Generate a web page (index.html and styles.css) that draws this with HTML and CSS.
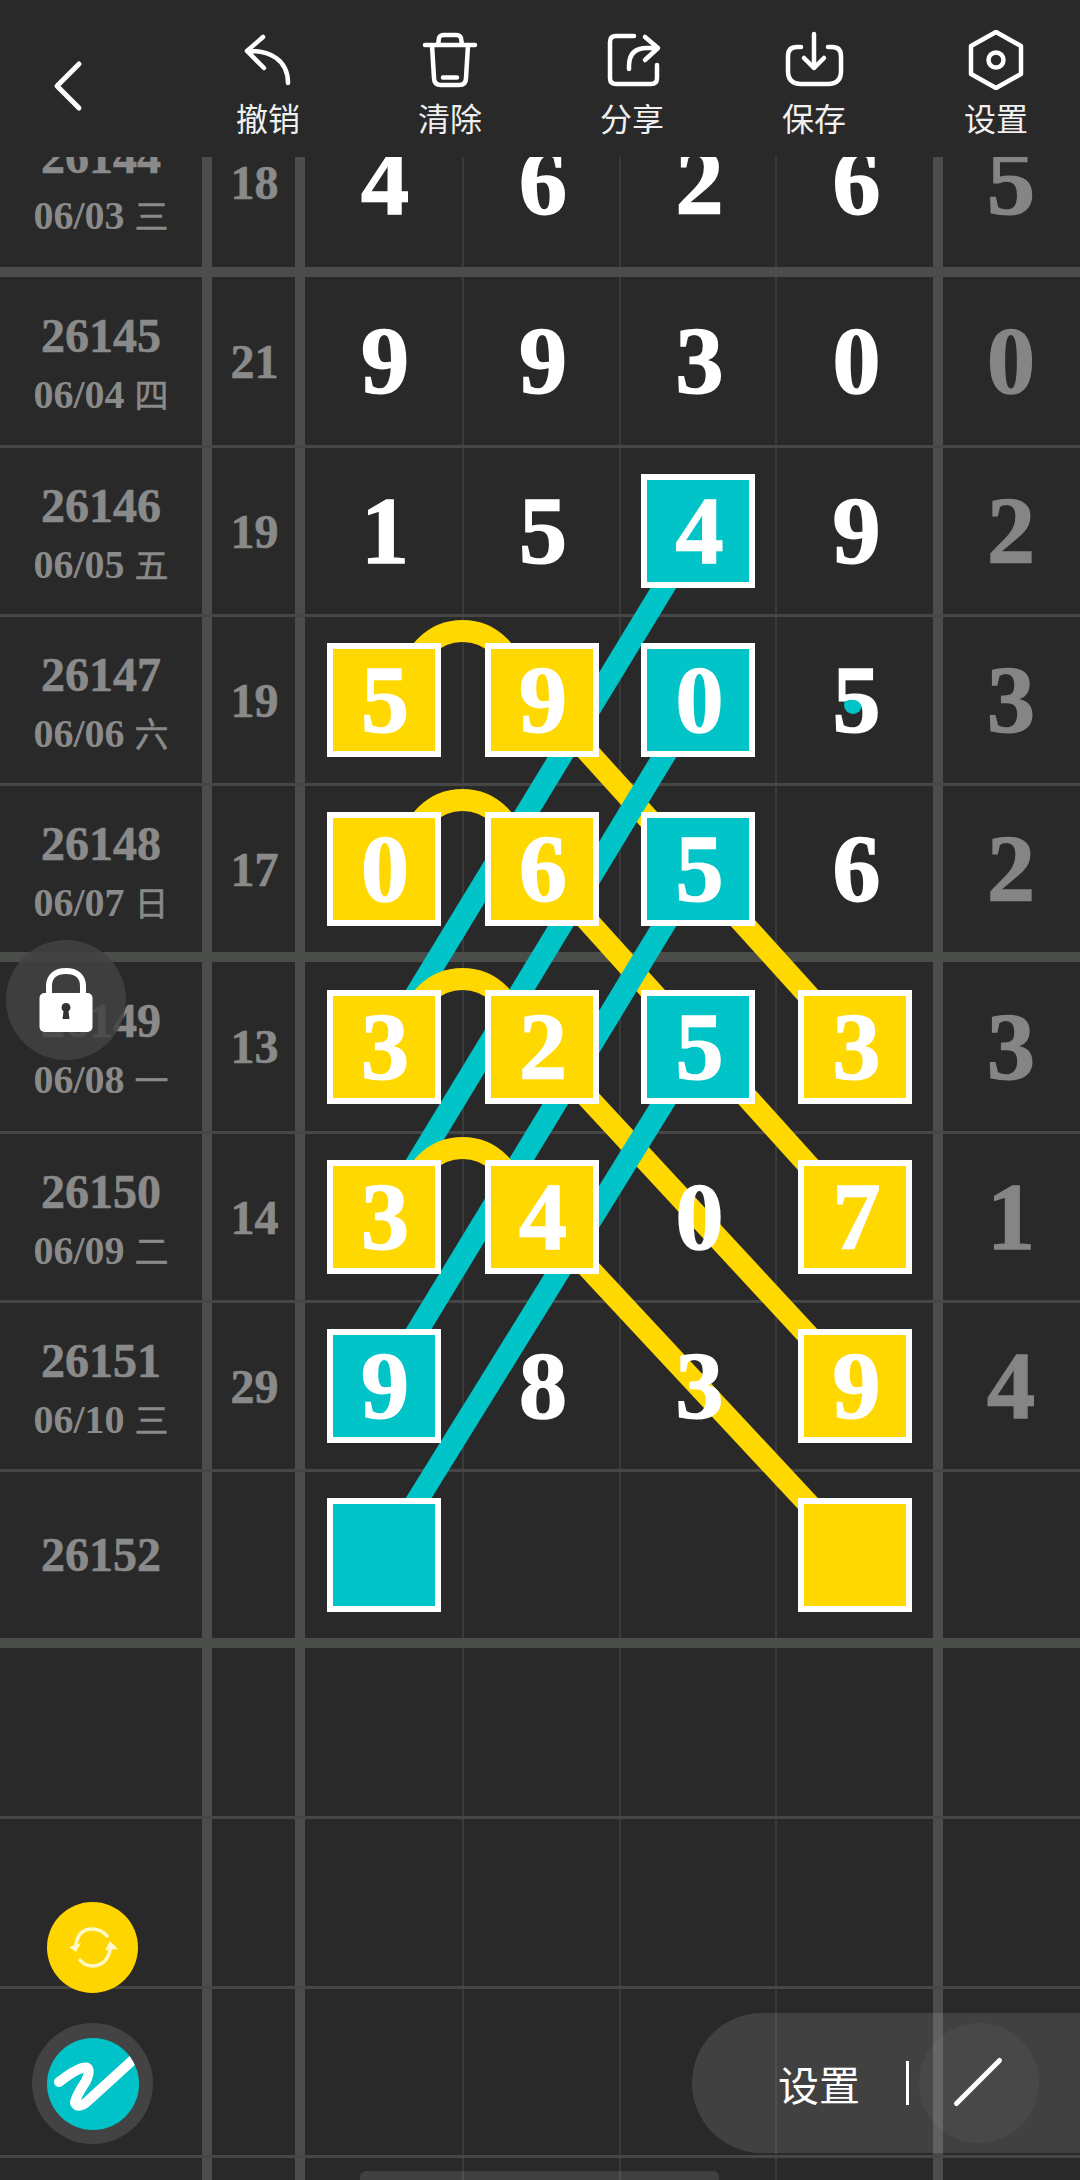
FILE: index.html
```html
<!DOCTYPE html>
<html lang="zh">
<head>
<meta charset="utf-8">
<title>走势图</title>
<link rel="stylesheet" href="styles.css">
</head>
<body>
<div class="page">
  <header class="toolbar">
    <div class="back">
      <svg class="back-icon" viewBox="0 0 36 56" width="36" height="56"><polyline points="29,6 7,28 29,50"/></svg>
    </div>
    <div class="tool">
      <svg class="icon" viewBox="0 0 60 60" width="60" height="60"><path d="M25 7 9 21 26 38M9 21C32 20 50 30 50 53"/></svg>
      <span class="tool-label">撤销</span>
    </div>
    <div class="tool">
      <svg class="icon" viewBox="0 0 60 60" width="60" height="60"><path d="M5 15H55M18 15 19 8Q20 5 24 5H36Q40 5 41 8L42 15M12 15 14 48Q14 55 21 55H39Q46 55 46 48L48 15M23 47.500H37"/></svg>
      <span class="tool-label">清除</span>
    </div>
    <div class="tool">
      <svg class="icon" viewBox="0 0 60 60" width="60" height="60"><path d="M32 6H14Q8 6 8 12V48Q8 54 14 54H49Q55 54 55 48V35M43 7 56 18 43 30M27 39V36Q27 18 45 18H55"/></svg>
      <span class="tool-label">分享</span>
    </div>
    <div class="tool">
      <svg class="icon" viewBox="0 0 60 60" width="60" height="60"><path d="M17 17H13Q4 17 4 26V41Q4 54 17 54H44Q57 54 57 41V26Q57 17 48 17H44M30 4V38M20 28 30 38 40 28"/></svg>
      <span class="tool-label">保存</span>
    </div>
    <div class="tool">
      <svg class="icon" viewBox="0 0 60 60" width="60" height="60"><path d="M30 2 55 16V44L30 58 5 44V16Z"/><circle cx="30" cy="30" r="7.500"/></svg>
      <span class="tool-label">设置</span>
    </div>
  </header>

  <main class="board">
    <svg class="links" viewBox="0 97 1080 2083">
      <g class="link-yellow">
        <line x1="541" y1="700" x2="855" y2="1047"/>
        <line x1="541" y1="869" x2="855" y2="1217"/>
        <line x1="541" y1="1047" x2="855" y2="1386"/>
        <line x1="541" y1="1217" x2="855" y2="1554"/>
      </g>
      <g class="link-cyan">
        <line x1="698" y1="531" x2="384" y2="1047"/>
        <line x1="698" y1="700" x2="384" y2="1217"/>
        <line x1="698" y1="869" x2="384" y2="1386"/>
        <line x1="698" y1="1047" x2="384" y2="1554"/>
      </g>
      <circle class="link-dot" cx="853" cy="705" r="9"/>
      <g class="link-arc">
        <path d="M410.500 683A52 52 0 0 1 514.500 683"/>
        <path d="M410.500 852A52 52 0 0 1 514.500 852"/>
        <path d="M410.500 1031A52 52 0 0 1 514.500 1031"/>
        <path d="M410.500 1200A52 52 0 0 1 514.500 1200"/>
      </g>
    </svg>

    <div class="row">
      <div class="cell issue"><b class="no">26144</b><span class="date">06/03 <i>三</i></span></div>
      <div class="cell sum">18</div>
      <div class="cell num"><span class="d">4</span></div>
      <div class="cell num"><span class="d">6</span></div>
      <div class="cell num"><span class="d">2</span></div>
      <div class="cell num"><span class="d">6</span></div>
      <div class="cell span"><span class="d">5</span></div>
    </div>
    <div class="row">
      <div class="cell issue"><b class="no">26145</b><span class="date">06/04 <i>四</i></span></div>
      <div class="cell sum">21</div>
      <div class="cell num"><span class="d">9</span></div>
      <div class="cell num"><span class="d">9</span></div>
      <div class="cell num"><span class="d">3</span></div>
      <div class="cell num"><span class="d">0</span></div>
      <div class="cell span"><span class="d">0</span></div>
    </div>
    <div class="row">
      <div class="cell issue"><b class="no">26146</b><span class="date">06/05 <i>五</i></span></div>
      <div class="cell sum">19</div>
      <div class="cell num"><span class="d">1</span></div>
      <div class="cell num"><span class="d">5</span></div>
      <div class="cell num"><span class="d sq teal">4</span></div>
      <div class="cell num"><span class="d">9</span></div>
      <div class="cell span"><span class="d">2</span></div>
    </div>
    <div class="row">
      <div class="cell issue"><b class="no">26147</b><span class="date">06/06 <i>六</i></span></div>
      <div class="cell sum">19</div>
      <div class="cell num"><span class="d sq gold">5</span></div>
      <div class="cell num"><span class="d sq gold">9</span></div>
      <div class="cell num"><span class="d sq teal">0</span></div>
      <div class="cell num"><span class="d">5</span></div>
      <div class="cell span"><span class="d">3</span></div>
    </div>
    <div class="row">
      <div class="cell issue"><b class="no">26148</b><span class="date">06/07 <i>日</i></span></div>
      <div class="cell sum">17</div>
      <div class="cell num"><span class="d sq gold">0</span></div>
      <div class="cell num"><span class="d sq gold">6</span></div>
      <div class="cell num"><span class="d sq teal">5</span></div>
      <div class="cell num"><span class="d">6</span></div>
      <div class="cell span"><span class="d">2</span></div>
    </div>
    <div class="row">
      <div class="cell issue"><b class="no">26149</b><span class="date">06/08 <i>一</i></span></div>
      <div class="cell sum">13</div>
      <div class="cell num"><span class="d sq gold">3</span></div>
      <div class="cell num"><span class="d sq gold">2</span></div>
      <div class="cell num"><span class="d sq teal">5</span></div>
      <div class="cell num"><span class="d sq gold">3</span></div>
      <div class="cell span"><span class="d">3</span></div>
    </div>
    <div class="row">
      <div class="cell issue"><b class="no">26150</b><span class="date">06/09 <i>二</i></span></div>
      <div class="cell sum">14</div>
      <div class="cell num"><span class="d sq gold">3</span></div>
      <div class="cell num"><span class="d sq gold">4</span></div>
      <div class="cell num"><span class="d">0</span></div>
      <div class="cell num"><span class="d sq gold">7</span></div>
      <div class="cell span"><span class="d">1</span></div>
    </div>
    <div class="row">
      <div class="cell issue"><b class="no">26151</b><span class="date">06/10 <i>三</i></span></div>
      <div class="cell sum">29</div>
      <div class="cell num"><span class="d sq teal">9</span></div>
      <div class="cell num"><span class="d">8</span></div>
      <div class="cell num"><span class="d">3</span></div>
      <div class="cell num"><span class="d sq gold">9</span></div>
      <div class="cell span"><span class="d">4</span></div>
    </div>
    <div class="row">
      <div class="cell issue single"><b class="no">26152</b></div>
      <div class="cell sum"></div>
      <div class="cell num"><span class="d sq teal"></span></div>
      <div class="cell num"></div>
      <div class="cell num"></div>
      <div class="cell num"><span class="d sq gold"></span></div>
      <div class="cell span"></div>
    </div>
    <div class="row">
      <div class="cell"></div><div class="cell"></div><div class="cell"></div><div class="cell"></div><div class="cell"></div><div class="cell"></div><div class="cell"></div>
    </div>
    <div class="row">
      <div class="cell"></div><div class="cell"></div><div class="cell"></div><div class="cell"></div><div class="cell"></div><div class="cell"></div><div class="cell"></div>
    </div>
    <div class="row">
      <div class="cell"></div><div class="cell"></div><div class="cell"></div><div class="cell"></div><div class="cell"></div><div class="cell"></div><div class="cell"></div>
    </div>
    <div class="row">
      <div class="cell"></div><div class="cell"></div><div class="cell"></div><div class="cell"></div><div class="cell"></div><div class="cell"></div><div class="cell"></div>
    </div>
  </main>

  <div class="lock">
    <svg viewBox="0 0 54 66" width="54" height="66">
      <path class="lock-shackle" d="M10 28V19C10 9 17 4 27 4S44 9 44 19V28"/>
      <rect class="lock-body" x="0.500" y="26" width="53" height="39" rx="5"/>
      <path class="lock-hole" d="M27 36a4.500 4.500 0 0 1 2.500 8.200L30.500 52H23.500L24.500 44.200A4.500 4.500 0 0 1 27 36Z"/>
    </svg>
  </div>

  <div class="sync">
    <svg viewBox="0 0 91 91" width="91" height="91">
      <path class="sync-arc" d="M60 34Q54 27 45 27Q32 27 29 42M33 58Q38 64 46 64Q60 63 63 48"/>
      <path class="sync-head" d="M22 45 34 41 29 50ZM71 47 58 48 63 39Z"/>
    </svg>
  </div>

  <div class="logo">
    <svg viewBox="0 0 92 92" width="92" height="92">
      <path d="M12 44Q26 33 35 30Q46 27 39 43Q28 60 28 65Q32 72 43 61L88 20"/>
    </svg>
  </div>

  <div class="pen-pill">
    <span class="pen-label">设置</span>
    <span class="pen-divider"></span>
    <span class="pen-circle">
      <svg viewBox="0 0 120 120" width="120" height="120"><line x1="37.500" y1="80.500" x2="80.500" y2="37.500"/></svg>
    </span>
  </div>

  <div class="home-bar"></div>
</div>
</body>
</html>
```

FILE: styles.css
```css
* { box-sizing: border-box; }

html, body {
  margin: 0;
  padding: 0;
  background: #292929;
}

.page {
  position: relative;
  width: 1080px;
  height: 2180px;
  overflow: hidden;
  background: #292929;
  font-family: "Liberation Serif", "Noto Sans CJK SC", serif;
}

/* toolbar */
.toolbar {
  position: relative;
  z-index: 5;
  display: flex;
  height: 157px;
  background: #292929;
}

.back {
  flex: 0 0 177px;
  padding: 58px 0 0 50px;
}

.back-icon polyline {
  fill: none;
  stroke: #fff;
  stroke-width: 5;
  stroke-linecap: round;
  stroke-linejoin: round;
}

.tool {
  flex: 0 0 182px;
  display: flex;
  flex-direction: column;
  align-items: center;
  padding-top: 30px;
}

.icon {
  display: block;
  fill: none;
  stroke: #fff;
  stroke-width: 4.500;
  stroke-linecap: round;
  stroke-linejoin: round;
}

.tool-label {
  margin-top: 7px;
  font-family: "Noto Sans CJK SC", sans-serif;
  font-size: 32px;
  line-height: 40px;
  color: #f0f0f0;
}

/* board */
.board {
  position: relative;
  margin-top: -60px;
  display: grid;
  grid-template-rows: 180px 171px 169px 169px 176px 172px 169px 169px 176px 171px 170px 169px 60px;
}

.links {
  position: absolute;
  top: 0;
  left: 0;
  z-index: 1;
  width: 1080px;
  height: 2083px;
  fill: none;
  stroke-width: 22;
}

.link-yellow { stroke: #ffd800; }
.link-cyan { stroke: #00c4c8; }
.link-dot { fill: #00c4c8; stroke: none; }
.link-arc { stroke: #ffd800; stroke-width: 22; }

.row {
  display: grid;
  grid-template-columns: 212px 93px 159px 157px 156px 166px 137px;
  border-bottom: 3px solid #464646;
}

.row:nth-child(2), .row:nth-child(6), .row:nth-child(10) {
  border-bottom: 10px solid #4b4d4a;
}

.cell {
  display: flex;
  align-items: center;
  justify-content: center;
  border-right: 2px solid #3a3a3a;
}

.cell:nth-child(1), .cell:nth-child(2), .cell:nth-child(6) {
  border-right: 10px solid #4b4d4a;
}

.cell:nth-child(7) { border-right: 0; }

.issue {
  flex-direction: column;
  padding-top: 8px;
  color: #8a8a8a;
}

.issue.single { padding-top: 0; }

.no {
  font-size: 48px;
  line-height: 58px;
  font-weight: 700;
  -webkit-text-stroke: 0.6px #8a8a8a;
}

.date {
  font-size: 40px;
  line-height: 58px;
  font-weight: 700;
  white-space: nowrap;
}

.date i {
  font-style: normal;
  font-weight: 400;
  font-size: 34px;
  font-family: "Noto Sans CJK SC", sans-serif;
  -webkit-text-stroke: 0.5px #8a8a8a;
}

.sum {
  padding-left: 2px;
  font-size: 48px;
  font-weight: 700;
  color: #8a8a8a;
  -webkit-text-stroke: 0.6px #8a8a8a;
}

.num, .span {
  font-size: 96px;
  font-weight: 700;
  color: #fff;
  -webkit-text-stroke: 1.5px #fff;
}

.span {
  padding-right: 4px;
  border-right: 0;
  color: #858585;
  -webkit-text-stroke: 1.5px #858585;
}

.d {
  position: relative;
  z-index: 2;
  padding-left: 3px;
  line-height: 1;
}

.sq {
  display: flex;
  align-items: center;
  justify-content: center;
  width: 114px;
  height: 114px;
  border: 6px solid #fff;
}

.gold { background: #ffd800; }
.teal { background: #00c4c8; }

/* floating controls */
.lock {
  position: absolute;
  z-index: 6;
  left: 6px;
  top: 940px;
  width: 120px;
  height: 120px;
  border-radius: 50%;
  background: rgba(66, 66, 66, 0.85);
  display: flex;
  align-items: center;
  justify-content: center;
}

.lock-shackle { fill: none; stroke: #fff; stroke-width: 6; }
.lock-body { fill: #fff; }
.lock-hole { fill: #333; }

.sync {
  position: absolute;
  z-index: 6;
  left: 47px;
  top: 1902px;
  width: 91px;
  height: 91px;
  border-radius: 50%;
  background: #ffd500;
}

.sync-arc { fill: none; stroke: #fff8c8; stroke-width: 3.500; stroke-linecap: round; }
.sync-head { fill: #fff8c8; }

.logo {
  position: absolute;
  z-index: 6;
  left: 32px;
  top: 2023px;
  width: 121px;
  height: 121px;
  padding: 14.500px;
  border-radius: 50%;
  background: #434343;
}

.logo svg {
  display: block;
  border-radius: 50%;
  background: #00c3c9;
}

.logo path {
  fill: none;
  stroke: #fff;
  stroke-width: 10;
  stroke-linecap: round;
  stroke-linejoin: round;
}

.pen-pill {
  position: absolute;
  z-index: 6;
  left: 692px;
  top: 2013px;
  width: 388px;
  height: 140px;
  padding-left: 86px;
  display: flex;
  align-items: center;
  border-radius: 70px 0 0 70px;
  background: rgba(255, 255, 255, 0.115);
}

.pen-label {
  font-family: "Noto Sans CJK SC", sans-serif;
  font-size: 41px;
  color: #fff;
}

.pen-divider {
  width: 3px;
  height: 44px;
  margin-left: 46px;
  background: #fff;
}

.pen-circle {
  width: 120px;
  height: 120px;
  margin-left: 10px;
  border-radius: 50%;
  background: rgba(255, 255, 255, 0.04);
}

.pen-circle svg { display: block; }
.pen-circle line { stroke: #fff; stroke-width: 5; stroke-linecap: round; }

.home-bar {
  position: absolute;
  z-index: 6;
  left: 360px;
  top: 2171px;
  width: 359px;
  height: 9px;
  border-radius: 6px 6px 0 0;
  background: rgba(255, 255, 255, 0.11);
}
```
